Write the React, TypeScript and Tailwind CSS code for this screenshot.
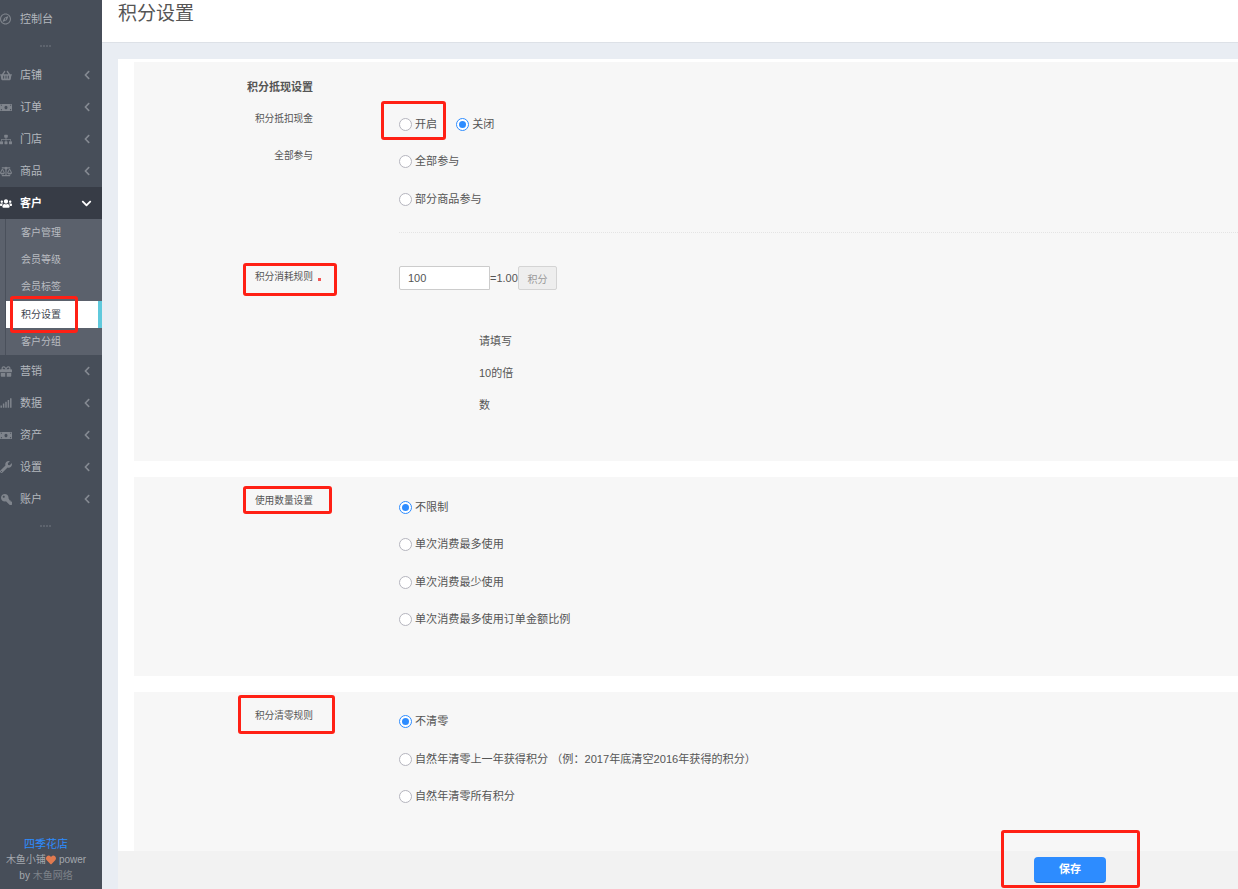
import React from 'react'
import {
  FaBalanceScale,
  FaChevronDown,
  FaChevronLeft,
  FaGift,
  FaHeart,
  FaKey,
  FaMoneyBill,
  FaRegCompass,
  FaShoppingBasket,
  FaSignal,
  FaSitemap,
  FaUsers,
  FaWrench,
} from 'react-icons/fa'

const topMenu = [
  { label: '店铺', icon: <FaShoppingBasket size={15} /> },
  { label: '订单', icon: <FaMoneyBill size={15} /> },
  { label: '门店', icon: <FaSitemap size={13} /> },
  { label: '商品', icon: <FaBalanceScale size={15} /> },
]

const bottomMenu = [
  { label: '营销', icon: <FaGift size={13} /> },
  { label: '数据', icon: <FaSignal size={12} /> },
  { label: '资产', icon: <FaMoneyBill size={15} /> },
  { label: '设置', icon: <FaWrench size={12} /> },
  { label: '账户', icon: <FaKey size={11} className="-rotate-90" /> },
]

const subMenu = ['客户管理', '会员等级', '会员标签', '积分设置', '客户分组']

const MenuItem = ({ label, icon }: { label: string; icon: React.ReactNode }) => (
  <div className="flex h-8 items-center text-[11px] text-[#b4b8be]">
    <span className="flex w-5 shrink-0 justify-end pr-[8px] text-[#7f848c]">{icon}</span>
    <span>{label}</span>
    <FaChevronLeft size={10} className="ml-auto mr-[10px] text-[#858a92]" />
  </div>
)

const Dots = ({ className }: { className: string }) => (
  <div className={`flex items-center justify-center gap-px pr-[12px] ${className}`}>
    <span className="h-0.5 w-0.5 bg-[#5d636d]" />
    <span className="h-0.5 w-0.5 bg-[#5d636d]" />
    <span className="h-0.5 w-0.5 bg-[#5d636d]" />
    <span className="h-0.5 w-0.5 bg-[#5d636d]" />
  </div>
)

const Sidebar = () => (
  <aside className="flex h-full w-[102px] shrink-0 flex-col bg-[#474e59]">
    <div className="flex h-[38px] items-center text-[11px] text-[#b4b8be]">
      <span className="flex w-5 shrink-0 justify-end pr-[9px] text-[#7f848c]">
        <FaRegCompass size={12} />
      </span>
      <span>控制台</span>
    </div>
    <Dots className="mb-[5px] h-4" />
    {topMenu.map((m) => (
      <MenuItem key={m.label} {...m} />
    ))}
    <div className="flex h-8 items-center bg-[#373c46] text-[11px] font-bold text-white">
      <span className="flex w-5 shrink-0 justify-end pr-[8px]">
        <FaUsers size={15} />
      </span>
      <span>客户</span>
      <FaChevronDown size={11} className="ml-auto mr-[10px]" />
    </div>
    <div className="h-[136px] bg-[#5b616c] pl-[5px]">
      <div className="h-full border-l border-l-[#4a505b]">
        {subMenu.map((s) =>
          s === '积分设置' ? (
            <div
              key={s}
              className="flex h-[27px] items-center border-r-[4px] border-r-[#5fc9dc] bg-white pl-[15px] text-[10px] text-[#3f4650]"
            >
              {s}
            </div>
          ) : s === '会员标签' ? (
            <div key={s} className="flex h-[28px] items-center pb-px pl-[15px] text-[10px] text-[#b9bcc1]">
              {s}
            </div>
          ) : (
            <div key={s} className="flex h-[27px] items-center pl-[15px] text-[10px] text-[#b9bcc1]">
              {s}
            </div>
          ),
        )}
      </div>
    </div>
    {bottomMenu.map((m) => (
      <MenuItem key={m.label} {...m} />
    ))}
    <Dots className="h-[22px]" />
    <div className="mt-auto flex flex-col items-center pb-[5px] pr-[10px] text-[10px] leading-4 text-[#a4a8ae]">
      <span className="text-[11px] text-[#2d8cff]">四季花店</span>
      <span className="flex items-center">
        木鱼小铺
        <FaHeart size={10} className="text-[#e07a50]" />
        <span className="ml-[3px]">power</span>
      </span>
      <span>
        by <span className="text-[#7d8289]">木鱼网络</span>
      </span>
    </div>
  </aside>
)

const Radio = ({ label, checked }: { label: string; checked?: boolean }) => (
  <span className="flex items-center gap-[3px] text-[11.1px] leading-[13px] text-[#555]">
    {checked ? (
      <span className="flex h-[13px] w-[13px] items-center justify-center rounded-full border border-[#2d8cff] bg-white">
        <span className="h-[7px] w-[7px] rounded-full bg-[#2d8cff]" />
      </span>
    ) : (
      <span className="h-[13px] w-[13px] rounded-full border border-[#b5b5be] bg-white" />
    )}
    {label}
  </span>
)

const FormRow = ({
  label,
  height,
  children,
}: {
  label?: React.ReactNode
  height: string
  children: React.ReactNode
}) => (
  <div className={`flex ${height}`}>
    <div className="w-[179px] shrink-0 text-right text-[9.7px] leading-[25px] text-[#555]">{label}</div>
    <div className="ml-[86px] flex min-w-0 flex-1 items-center gap-[19px]">{children}</div>
  </div>
)

const PointsCard = () => (
  <section className="h-[399px] shrink-0 bg-[#f7f7f7]">
    <div className="w-[179px] pt-[18px] text-right text-[11px] font-bold leading-[14px] text-[#555]">积分抵现设置</div>
    <div className="h-3" />
    <FormRow label="积分抵扣现金" height="h-[37px]">
      <Radio label="开启" />
      <Radio label="关闭" checked />
    </FormRow>
    <FormRow label="全部参与" height="h-[37px]">
      <Radio label="全部参与" />
    </FormRow>
    <FormRow height="h-[38px]">
      <Radio label="部分商品参与" />
    </FormRow>
    <div className="ml-[265px] mt-[14px] border-t border-dotted border-t-[#e4e4e4]" />
    <div className="mt-[33px] flex">
      <div className="w-[179px] shrink-0 text-right text-[9.7px] leading-[22px] text-[#555]">
        积分消耗规则
        <span className="absolute ml-[5px] mt-[12px] h-[3px] w-[3px] bg-[#f25555]" />
      </div>
      <div className="ml-[86px] flex items-start">
        <div className="flex h-6 w-[91px] items-center rounded-l-[2px] border border-[#ccc] bg-white pl-2 text-[11px] text-[#555]">
          100
        </div>
        <div className="w-[28px] overflow-hidden whitespace-nowrap text-[11px] leading-6 text-[#555]">=1.00</div>
        <div className="flex h-6 w-[39px] items-center justify-center rounded-[2px] border border-[#d4d4d4] bg-[#eeeeee] pt-[3px] text-[10px] text-[#999]">
          积分
        </div>
      </div>
    </div>
    <div className="ml-[345px] mt-[35px] w-[36px] break-all text-[11px] leading-8 text-[#555]">请填写10的倍数</div>
  </section>
)

const LimitCard = () => (
  <section className="mt-4 flex h-[199px] shrink-0 bg-[#f7f7f7]">
    <div className="w-[179px] shrink-0 pt-[12px] text-right text-[9.7px] leading-6 text-[#555]">使用数量设置</div>
    <div className="ml-[86px] flex flex-col gap-[24.67px] pt-[23.5px]">
      <Radio label="不限制" checked />
      <Radio label="单次消费最多使用" />
      <Radio label="单次消费最少使用" />
      <Radio label="单次消费最多使用订单金额比例" />
    </div>
  </section>
)

const ClearCard = () => (
  <section className="mt-4 flex h-[200px] shrink-0 bg-[#f7f7f7]">
    <div className="w-[179px] shrink-0 pt-[12px] text-right text-[9.7px] leading-6 text-[#555]">积分清零规则</div>
    <div className="ml-[86px] flex flex-col gap-[24.5px] pt-[23px]">
      <Radio label="不清零" checked />
      <Radio label="自然年清零上一年获得积分 （例：2017年底清空2016年获得的积分）" />
      <Radio label="自然年清零所有积分" />
    </div>
  </section>
)

const Annotation = ({ className }: { className: string }) => (
  <div className={`pointer-events-none absolute rounded-[3px] border-[3px] border-[#ff2015] ${className}`} />
)

export default function App() {
  return (
    <div
      className="relative flex h-[889px] w-[1238px] overflow-hidden bg-[#e9edf3]"
      style={{ fontFamily: '"Liberation Sans", "Noto Sans CJK SC", sans-serif' }}
    >
      <Sidebar />
      <main className="flex min-w-0 flex-1 flex-col">
        <header className="h-[43px] shrink-0 border-b border-b-[#dde1e7] bg-white pl-4 text-[19px] leading-[27px] text-[#555]">
          积分设置
        </header>
        <div className="ml-4 mt-4 flex min-h-0 flex-1 flex-col bg-white">
          <div className="flex h-[792px] flex-col overflow-hidden pl-4 pt-[3px]">
            <PointsCard />
            <LimitCard />
            <ClearCard />
          </div>
          <div className="flex h-[38px] shrink-0 items-center bg-[#f2f2f2] pl-[916px]">
            <button className="h-[26px] w-[72px] rounded-[4px] border-b border-b-[#1f6fd0] bg-[#2d8cff] text-[11px] font-bold text-white">
              保存
            </button>
          </div>
        </div>
      </main>
      <Annotation className="left-[381px] top-[101px] h-[39px] w-[65px]" />
      <Annotation className="left-[10px] top-[296px] h-[37px] w-[68px]" />
      <Annotation className="left-[243px] top-[263px] h-[33px] w-[94px]" />
      <Annotation className="left-[243px] top-[486px] h-[28px] w-[89px]" />
      <Annotation className="left-[238px] top-[695px] h-[39px] w-[97px]" />
      <Annotation className="left-[1001px] top-[830px] h-[58px] w-[139px]" />
    </div>
  )
}
